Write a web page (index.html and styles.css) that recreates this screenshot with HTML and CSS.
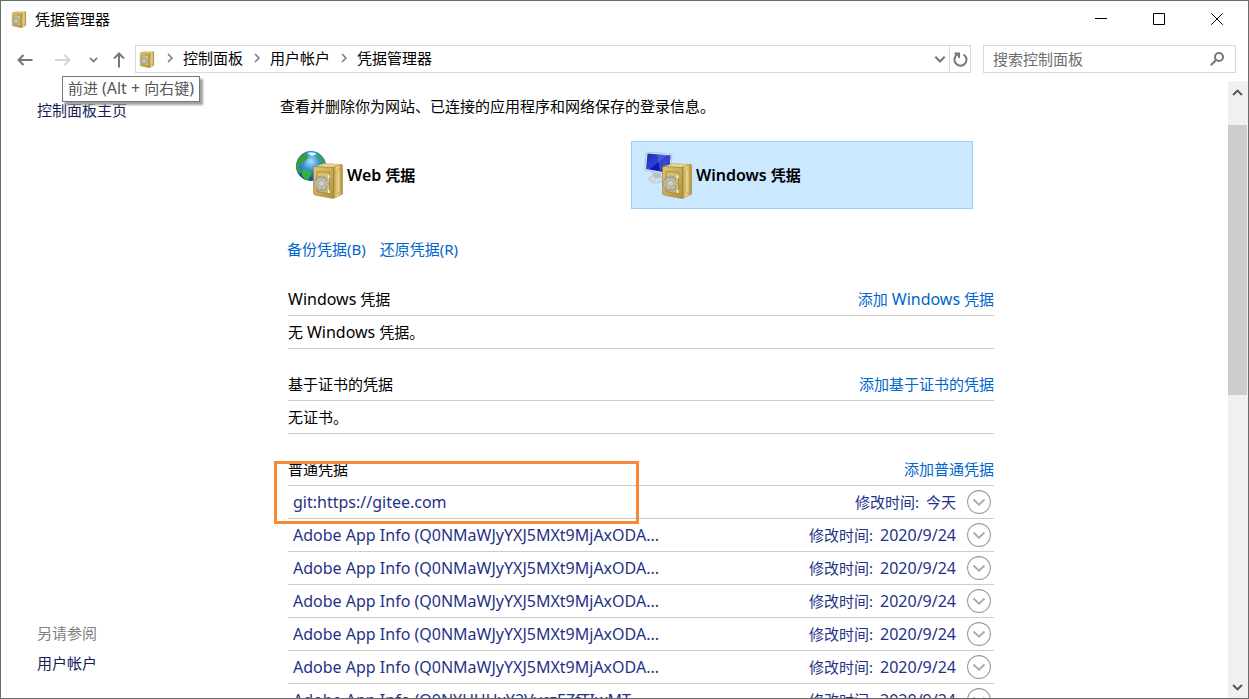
FILE: index.html
```html
<!DOCTYPE html>
<html lang="zh-CN">
<head>
<meta charset="utf-8">
<title>凭据管理器</title>
<link rel="stylesheet" href="styles.css">
</head>
<body>
<svg class="defs" aria-hidden="true">
  <defs>
    <linearGradient id="gold" x1="0" y1="0" x2="1" y2="1"><stop offset="0" stop-color="#dcc878"/><stop offset="1" stop-color="#b0923a"/></linearGradient>
    <linearGradient id="side" x1="0" y1="0" x2="1" y2="0"><stop offset="0" stop-color="#9a7b2a"/><stop offset=".45" stop-color="#f0dc98"/><stop offset="1" stop-color="#b08c34"/></linearGradient>
    <linearGradient id="door" x1="0" y1="0" x2="0" y2="1"><stop offset="0" stop-color="#cdb564"/><stop offset=".55" stop-color="#ecdea4"/><stop offset="1" stop-color="#c4a854"/></linearGradient>
    <radialGradient id="sea" cx=".5" cy=".35" r=".65"><stop offset="0" stop-color="#a9e2fb"/><stop offset=".4" stop-color="#3d97e0"/><stop offset="1" stop-color="#123c94"/></radialGradient>
    <linearGradient id="screen" x1="0" y1="0" x2="1" y2="1"><stop offset="0" stop-color="#1c2fae"/><stop offset=".45" stop-color="#2a44d8"/><stop offset=".5" stop-color="#0c17b4"/><stop offset="1" stop-color="#1b2cc6"/></linearGradient>
    <symbol id="safe" viewBox="0 0 30 36">
      <path d="M1 3.500 11 .5 28.500 1.500 20 5z" fill="#e9d690" stroke="#b49543" stroke-width=".5"/>
      <path d="M19.500 4.500 28.500 1.500Q29.500 1.500 29.500 3V31L20.500 35.500z" fill="url(#side)" stroke="#9c7c2e" stroke-width=".5"/>
      <path d="M23 7 27 5.500V29L23 31z" fill="#e5ce82" stroke="#b8973f" stroke-width=".5"/>
      <path d="M.5 5Q.5 3.500 2 3.500L19 4.500Q20.500 4.500 20.500 6V34Q20.500 35.500 19 35.300L2 32Q.5 31.700.5 30z" fill="url(#gold)" stroke="#9c7c2e" stroke-width=".6"/>
      <path d="M4 8.500 16.500 9.300V31L4 28.500z" fill="url(#door)" stroke="#a08030" stroke-width=".7"/>
      <path d="M15.800 12v3M15.800 27v3" stroke="#f5f2e5" stroke-width="1.600"/>
      <ellipse cx="8.500" cy="20.500" rx="6.300" ry="6.800" fill="#d9c88a" stroke="#7c7c7c" stroke-width="1.900"/>
      <ellipse cx="8.500" cy="20.500" rx="6.300" ry="6.800" fill="none" stroke="#cfcfcf" stroke-width=".9"/>
      <path d="M8.500 15v11M3.800 18.500l9.400 4.500M4.200 23.500l8.600-6" stroke="#a3a3a3" stroke-width=".9"/>
      <circle cx="8.500" cy="20.500" r="3.200" fill="#cdcdcd" stroke="#8d8d8d" stroke-width=".6"/>
    </symbol>
    <symbol id="chev" viewBox="0 0 10 6"><path d="M1 .7 5 4.700 9 .7" fill="none" stroke="currentColor" stroke-width="1.800"/></symbol>
    <symbol id="sep" viewBox="0 0 6 10"><path d="M1 1 5 5 1 9" fill="none" stroke="currentColor" stroke-width="1.500"/></symbol>
    <symbol id="ring" viewBox="0 0 24 24"><circle cx="12" cy="12" r="11.400" fill="#fff" stroke="#999" stroke-width="1.100"/><path d="M6.500 9.500 12 14.700 17.500 9.500" fill="none" stroke="#aaa" stroke-width="1.800"/></symbol>
  </defs>
</svg>
<div class="window">
  <header class="titlebar">
    <svg class="app-icon"><use href="#safe"/></svg>
    <h1>凭据管理器</h1>
    <div class="controls">
      <button type="button" aria-label="最小化"><svg viewBox="0 0 12 12"><path d="M0 5.500h12" /></svg></button>
      <button type="button" aria-label="最大化"><svg viewBox="0 0 12 12"><path d="M.5.500h11v11H.5z"/></svg></button>
      <button type="button" aria-label="关闭"><svg viewBox="0 0 12 12"><path d="M.3.300l11.400 11.400M11.700.300.3 11.700"/></svg></button>
    </div>
  </header>
  <nav class="navbar">
    <div class="arrows">
      <button type="button" aria-label="后退"><svg width="16" height="12" viewBox="0 0 16 12"><path d="M15.500 6H1.500M6.500 1l-5 5 5 5"/></svg></button>
      <div class="forward">
        <button type="button" class="dim" aria-label="前进" aria-describedby="tip"><svg width="16" height="12" viewBox="0 0 16 12"><path d="M0 6h14M9.500 1l5 5-5 5"/></svg></button>
        <div class="tooltip" role="tooltip" id="tip">前进 <span class="latin">(Alt + </span>向右键<span class="latin">)</span></div>
      </div>
      <button type="button" class="recent" aria-label="最近位置"><svg width="9" height="6"><use href="#chev"/></svg></button>
      <button type="button" class="up" aria-label="上移"><svg width="12" height="16" viewBox="0 0 12 16"><path d="M6 15.500V1.500M1 6.500l5-5 5 5"/></svg></button>
    </div>
    <div class="address">
      <svg class="app-icon"><use href="#safe"/></svg>
      <ol class="crumbs">
        <li><svg><use href="#sep"/></svg><a href="#">控制面板</a></li>
        <li><svg><use href="#sep"/></svg><a href="#">用户帐户</a></li>
        <li><svg><use href="#sep"/></svg><a href="#">凭据管理器</a></li>
      </ol>
      <button type="button" class="drop" aria-label="历史记录"><svg width="12" height="7"><use href="#chev"/></svg></button>
      <button type="button" class="refresh" aria-label="刷新"><svg width="15" height="15" viewBox="0 0 15 15"><path d="M10.500 2.500A6 6 0 1 1 5 2.200M1.500 1.500H6V6"/></svg></button>
    </div>
    <form class="search">
      <input type="search" aria-label="搜索控制面板" placeholder="搜索控制面板">
      <button type="button" aria-label="搜索"><svg width="14" height="14" viewBox="0 0 14 14"><circle cx="9" cy="5" r="4"/><path d="M6 8 .8 13.200"/></svg></button>
    </form>
  </nav>
  <div class="body">
    <aside class="sidebar">
      <a href="#">控制面板主页</a>
      <div class="see-also">
        <h2>另请参阅</h2>
        <a href="#">用户帐户</a>
      </div>
    </aside>
    <main class="main">
      <p class="intro">查看并删除你为网站、已连接的应用程序和网络保存的登录信息。</p>
      <div class="vaults">
        <button type="button" class="vault">
          <svg viewBox="0 0 48 48">
            <circle cx="16" cy="15" r="15" fill="url(#sea)"/>
            <path d="M3 8Q7 2 12 2L11 5 14 6 11 9 8 12 5 12 4 16 7 19 5 23Q1 20 1 14z" fill="#35a03b"/>
            <path d="M7 19 12 19 17 22 13 29Q9 28 7 25z" fill="#2fb33a"/>
            <path d="M21 2 25 4Q30 8 30 14L27 11 24 10 22 6z" fill="#3da252"/>
            <path d="M12 2Q18 0 22 3L17 5z" fill="#dff5f2"/>
            <use href="#safe" x="18" y="12" width="30" height="36"/>
          </svg>
          <span><span class="latin">Web</span> 凭据</span>
        </button>
        <button type="button" class="vault selected">
          <svg viewBox="0 0 48 48">
            <ellipse cx="12" cy="28" rx="7" ry="4" fill="#d5dae0" stroke="#aeb6c0" stroke-width=".6"/>
            <path d="M8 21 17 23 16 27 10 27z" fill="#b8c0ca"/>
            <path d="M2 1 28 3 26 24 .5 19z" fill="#dfe5ed" stroke="#a9b4c3" stroke-width=".6"/>
            <path d="M3.500 2.500 26.500 4.500 25 22 2 18z" fill="url(#screen)"/>
            <path d="M13 3.500 26.500 4.500 26 11 16 20z" fill="#7388ed" opacity=".4"/>
            <use href="#safe" x="18" y="12" width="30" height="36"/>
          </svg>
          <span><span class="latin">Windows</span> 凭据</span>
        </button>
      </div>
      <div class="actions"><a href="#">备份凭据(B)</a><a href="#">还原凭据(R)</a></div>

      <section class="group">
        <div class="head"><h2><span class="latin">Windows</span> 凭据</h2><a href="#">添加 <span class="latin">Windows</span> 凭据</a></div>
        <p class="row empty"><span>无 <span class="latin">Windows</span> 凭据。</span></p>
      </section>
      <section class="group">
        <div class="head"><h2>基于证书的凭据</h2><a href="#">添加基于证书的凭据</a></div>
        <p class="row empty">无证书。</p>
      </section>
      <section class="group">
        <div class="head"><h2>普通凭据</h2><a href="#">添加普通凭据</a></div>
        <ul>
          <li class="row"><span class="name latin">git:https://gitee.com</span><span>修改时间:</span><span class="date">今天</span><button type="button" aria-label="展开"><svg><use href="#ring"/></svg></button></li>
          <li class="row"><span class="name latin">Adobe App Info (Q0NMaWJyYXJ5MXt9MjAxODA...</span><span>修改时间:</span><span class="date latin">2020/9/24</span><button type="button" aria-label="展开"><svg><use href="#ring"/></svg></button></li>
          <li class="row"><span class="name latin">Adobe App Info (Q0NMaWJyYXJ5MXt9MjAxODA...</span><span>修改时间:</span><span class="date latin">2020/9/24</span><button type="button" aria-label="展开"><svg><use href="#ring"/></svg></button></li>
          <li class="row"><span class="name latin">Adobe App Info (Q0NMaWJyYXJ5MXt9MjAxODA...</span><span>修改时间:</span><span class="date latin">2020/9/24</span><button type="button" aria-label="展开"><svg><use href="#ring"/></svg></button></li>
          <li class="row"><span class="name latin">Adobe App Info (Q0NMaWJyYXJ5MXt9MjAxODA...</span><span>修改时间:</span><span class="date latin">2020/9/24</span><button type="button" aria-label="展开"><svg><use href="#ring"/></svg></button></li>
          <li class="row"><span class="name latin">Adobe App Info (Q0NMaWJyYXJ5MXt9MjAxODA...</span><span>修改时间:</span><span class="date latin">2020/9/24</span><button type="button" aria-label="展开"><svg><use href="#ring"/></svg></button></li>
          <li class="row"><span class="name latin">Adobe App Info (Q0NYUHUxY2VyczEZfTIwMT...</span><span>修改时间:</span><span class="date latin">2020/9/24</span><button type="button" aria-label="展开"><svg><use href="#ring"/></svg></button></li>
        </ul>
        <div class="marker"></div>
      </section>
    </main>
    <div class="scrollbar">
      <button type="button" aria-label="向上滚动"><svg class="flip" width="11" height="7"><use href="#chev"/></svg></button>
      <div class="track"><div class="thumb"></div></div>
      <button type="button" aria-label="向下滚动"><svg width="11" height="7"><use href="#chev"/></svg></button>
    </div>
  </div>
</div>
</body>
</html>
```
FILE: styles.css
```css
* { box-sizing: border-box; margin: 0; padding: 0; }
body {
  font: 15px/20px "Noto Sans", "Noto Sans CJK SC", sans-serif;
  color: #000;
  background: #fff;
}
button { border: 0; background: none; font: inherit; color: inherit; display: flex; align-items: center; justify-content: center; }
svg { display: block; flex: none; }
a { text-decoration: none; color: #0066cc; white-space: nowrap; }
h1, h2 { font-size: 15px; font-weight: 400; }
ul, ol { list-style: none; }
.defs { position: absolute; width: 0; height: 0; }
.latin { font-size: 16px; }

.window { height: 100vh; display: flex; flex-direction: column; border: 1px solid #6b6b6b; overflow: hidden; }
.titlebar { display: flex; align-items: center; height: 36px; padding: 0 2px 0 10px; flex: none; }
.app-icon { width: 16px; height: 17px; }
.titlebar h1 { margin-left: 8px; }
.controls { display: flex; margin-left: auto; height: 100%; }
.controls button { width: 58px; }
.controls svg { width: 12px; height: 12px; fill: none; stroke: #000; stroke-width: 1; }

.navbar { display: flex; height: 28px; margin: 8px 12px 8px 0; flex: none; }
.arrows { display: flex; align-items: center; width: 134px; padding: 2px 0 0 16px; color: #777; }
.arrows svg { fill: none; stroke: currentColor; stroke-width: 2; }
.arrows .dim { color: #d4d4d4; }
.forward { position: relative; margin-left: 22px; }
.recent { margin-left: 18px; }
.up { margin-left: 15px; }
.tooltip {
  position: absolute; left: 7px; top: 22px; z-index: 2;
  padding: 1px 5px; height: 26px; white-space: nowrap;
  color: #575757; background: #fff; border: 1px solid #767676; box-shadow: 3px 3px 2px #a0a0a0;
}
.address { flex: 1; display: flex; align-items: center; border: 1px solid #d9d9d9; padding-left: 3px; color: #777; }
.crumbs { display: flex; gap: 11px; margin: 0 0 2px 12px; }
.crumbs li { display: flex; align-items: center; gap: 10px; }
.crumbs svg { width: 6px; height: 10px; }
.crumbs a { color: #000; }
.drop { margin-left: auto; width: 18px; height: 100%; }
.refresh { width: 21px; height: 100%; border-left: 1px solid #d9d9d9; }
.refresh svg, .search svg { fill: none; stroke: #777; stroke-width: 2; }
.search { display: flex; width: 253px; margin-left: 12px; border: 1px solid #d9d9d9; }
.search input { flex: 1; min-width: 0; border: 0; outline: 0; padding-left: 9px; font: inherit; background: none; }
.search input::placeholder { color: #6d6d6d; opacity: 1; }
.search button { width: 36px; }

.body { flex: 1; min-height: 0; display: flex; }
.sidebar { width: 271px; flex: none; display: flex; flex-direction: column; padding: 19px 0 25px 36px; }
.sidebar a { color: #151c55; }
.see-also { margin-top: auto; display: grid; gap: 10px; }
.see-also h2 { color: #808080; }
.main { flex: 1; min-width: 0; overflow: hidden; padding: 15px 0 0 8px; }
.vaults { display: flex; gap: 7px; margin: 25px 0 30px 2px; }
.vault { width: 342px; height: 68px; justify-content: flex-start; gap: 4px; padding: 0 0 1px 12px; border: 1px solid transparent; font-weight: 600; }
.vault svg { width: 48px; height: 48px; }
.selected { background: #cce8ff; border-color: #99d1ff; }
.actions { display: flex; gap: 14px; margin: 0 0 24px 7px; }
.group { position: relative; max-width: 706px; margin: 0 0 19px 8px; }
.head, .row { display: flex; align-items: center; height: 33px; border-bottom: 1px solid #ccc; }
.head { justify-content: space-between; }
.row { color: #1f3287; padding: 0 3px 0 5px; }
.empty { color: #000; padding: 0; }
.name { flex: 1; min-width: 0; overflow: hidden; white-space: nowrap; }
.date { margin: 0 11px 0 7px; }
.row svg { width: 24px; height: 24px; }
.marker { position: absolute; left: -14px; top: 8px; width: 365px; height: 63px; border: 3px solid #f68838; pointer-events: none; }

.scrollbar { width: 20px; flex: none; display: flex; flex-direction: column; background: #f0f0f0; color: #555; }
.scrollbar button { height: 22px; padding-right: 2px; }
.flip { transform: rotate(180deg); }
.track { flex: 1; padding-top: 22px; }
.thumb { height: 49%; width: 19px; background: #cdcdcd; }
```
